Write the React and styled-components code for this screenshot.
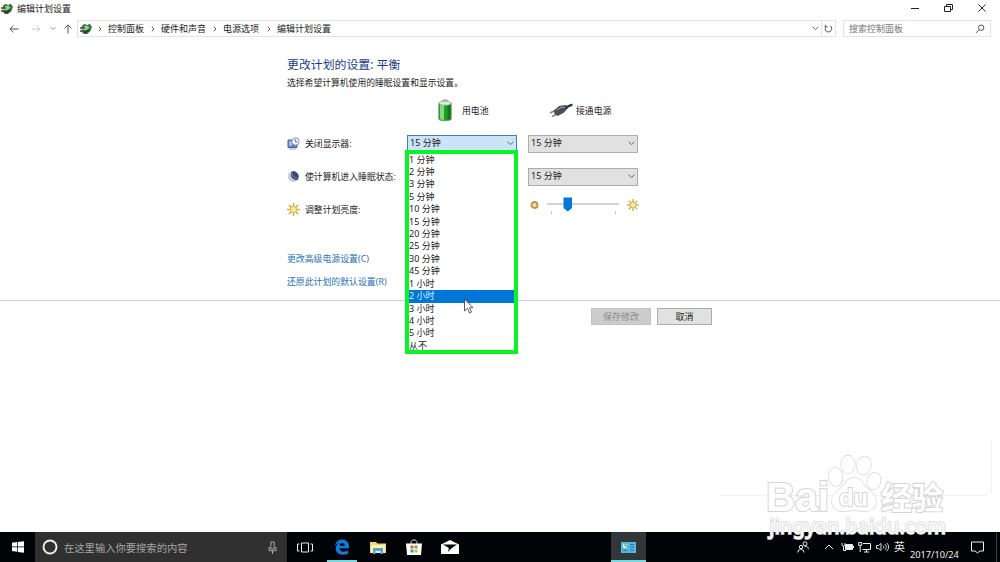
import React from 'react'
import styled, { createGlobalStyle } from 'styled-components'

const GlobalStyle = createGlobalStyle`
  * { box-sizing: border-box; }
  body {
    margin: 0;
    background: #fff;
    overflow: hidden;
    font-family: "Noto Sans", "Noto Sans CJK SC", sans-serif;
    font-size: 9px;
    color: #222;
  }
  svg { display: block; flex: none; }
`

const Screen = styled.div`
  position: relative;
  display: flex;
  flex-direction: column;
  width: 1000px;
  height: 562px;
  overflow: hidden;
`

// window chrome
const TitleBar = styled.header`
  display: flex;
  align-items: center;
  height: 17px;
  padding: 0 13px 0 1px;
`
const TitleText = styled.span`
  flex: 1;
  margin-left: 4px;
  line-height: 17px;
`
const WindowButtons = styled.div`
  display: flex;
  gap: 23px;
  margin-top: -2px;
`
const NavBar = styled.nav`
  display: flex;
  align-items: center;
  height: 23px;
  padding: 0 9px 0 8px;
`
const NavArrows = styled.div`
  display: flex;
  align-items: center;
  width: 69px;
`
const AddressBox = styled.div`
  display: flex;
  align-items: center;
  width: 759px;
  height: 17px;
  padding-left: 2px;
  border: 1px solid #e3e3e3;
`
const Crumb = styled.span`
  width: ${({ w }) => w}px;
  line-height: 15px;
  white-space: nowrap;
`
const CrumbArrow = styled.span`
  width: 16px;
  display: flex;
  justify-content: center;
`
const AddressTools = styled.div`
  display: flex;
  align-items: center;
  margin-left: auto;
  height: 15px;
`
const RefreshCell = styled.div`
  display: flex;
  align-items: center;
  justify-content: center;
  width: 14px;
  height: 15px;
  margin-left: 2px;
  border-left: 1px solid #e6e6e6;
`
const SearchBox = styled.div`
  display: flex;
  align-items: center;
  justify-content: space-between;
  width: 148px;
  height: 17px;
  margin-left: 7px;
  padding: 0 5px;
  border: 1px solid #e3e3e3;
  color: #757575;
`

// settings page
const Page = styled.main`
  display: flex;
  flex-direction: column;
  height: 261px;
  padding: 13px 0 0 287px;
  border-bottom: 1px solid #cfcfcf;
`
const Heading = styled.h1`
  margin: 0;
  font-size: 11.9px;
  font-weight: 400;
  line-height: 23px;
  color: #173c8c;
`
const Intro = styled.p`
  margin: 0 0 3px;
  font-size: 8.8px;
  line-height: 14px;
  padding-bottom: 1px;
`
const Row = styled.div`
  display: grid;
  grid-template-columns: 120px 110px 110px;
  align-items: center;
  height: 33px;
`
const Cell = styled.div`
  display: flex;
  align-items: center;
  gap: ${({ gap }) => gap || 5}px;
  padding-left: ${({ pad }) => pad || 0}px;
  font-size: 8.85px;
  line-height: 12px;
  white-space: nowrap;
`
const SelectWrap = styled.div`
  position: relative;
  grid-column: ${({ $col }) => $col};
  margin-left: ${({ $col }) => ($col === 3 ? 11 : 0)}px;
  margin-right: ${({ $col }) => ($col === 3 ? -11 : 0)}px;
`
const SelectBox = styled.div`
  display: flex;
  align-items: center;
  justify-content: space-between;
  height: 18px;
  padding: 0 2px;
  border: 1px solid ${({ $open }) => ($open ? '#3c7fb1' : '#adadad')};
  background: ${({ $open }) => ($open ? '#cce4f7' : '#e1e1e1')};
  line-height: 14px;
`
const SelectValue = styled.span`
  padding-bottom: 2px;
`
const Options = styled.ul`
  position: absolute;
  top: 15px;
  left: -2px;
  z-index: 2;
  width: 113px;
  height: 204px;
  margin: 0;
  padding: 0;
  list-style: none;
  border: 4px solid #05f525;
  background: #fff;
`
const Option = styled.li`
  height: 12.43px;
  line-height: 12.43px;
  color: ${({ $active }) => ($active ? '#d9edff' : '#222')};
  background: ${({ $active }) => ($active ? '#0076d7' : 'transparent')};
`
const Brightness = styled.div`
  grid-column: 3;
  display: flex;
  align-items: center;
  justify-content: space-between;
  width: 109px;
  height: 20px;
  margin: -9px 0 0 13px;
`
const Links = styled.div`
  display: flex;
  flex-direction: column;
  padding-top: 21px;
`
const Link = styled.a`
  height: 23px;
  font-size: 8.9px;
  line-height: 23px;
  color: #2671b8;
`
const Footer = styled.div`
  display: flex;
  gap: 6px;
  padding: 7px 0 0 591px;
`
const Button = styled.button`
  width: ${({ w }) => w}px;
  height: 17px;
  padding: 0;
  border: 1px solid ${({ disabled }) => (disabled ? '#c3c3c3' : '#adadad')};
  background: ${({ disabled }) => (disabled ? '#cccccc' : '#e1e1e1')};
  color: ${({ disabled }) => (disabled ? '#8d8d8d' : '#222')};
  font: inherit;
  line-height: 15px;
`

// overlays
const Watermark = styled.svg`
  position: absolute;
  left: 710px;
  top: 440px;
  z-index: 5;
`
const Cursor = styled.svg`
  position: absolute;
  left: 463px;
  top: 298px;
  z-index: 6;
`

// taskbar
const Taskbar = styled.footer`
  display: flex;
  align-items: center;
  height: 30px;
  margin-top: auto;
  background: #020306;
  color: #eee;
`
const StartButton = styled.div`
  display: flex;
  align-items: center;
  justify-content: center;
  width: 35px;
  height: 30px;
`
const TaskSearch = styled.div`
  display: flex;
  align-items: center;
  width: 252px;
  height: 30px;
  padding: 0 9px 0 7px;
  background: #303030;
  color: #a6a6a6;
  font-size: 10.3px;
`
const TaskSearchText = styled.span`
  flex: 1;
  margin-left: 6px;
  white-space: nowrap;
`
const TaskItem = styled.div`
  display: flex;
  align-items: center;
  justify-content: center;
  width: ${({ w }) => w}px;
  height: 30px;
  background: ${({ $current }) => ($current ? '#333638' : 'transparent')};
  box-shadow: ${({ $running }) => ($running ? 'inset 0 -2px #70dbe0' : 'none')};
`
const Tray = styled.div`
  display: flex;
  align-items: center;
  height: 30px;
  margin-left: auto;
`
const TrayIcon = styled.span`
  display: flex;
  justify-content: center;
  width: ${({ w }) => w}px;
`
const Lang = styled.span`
  width: 19px;
  text-align: center;
  font-size: 11px;
`
const DateText = styled.span`
  width: 52px;
  padding-top: 15px;
  font-size: 9.2px;
  line-height: 14px;
  white-space: nowrap;
`
const ShowDesktop = styled.div`
  width: 4px;
  height: 30px;
  border-left: 1px solid #3c3e40;
`

const PlanIcon = () => (
  <svg width="12" height="12" viewBox="0 0 12 12">
    <path d="M2 2.500 4.500 1l3 1L10 .5l.5 1.500L12 3.500 10.500 8 7 11H4L1.500 8.500z" fill="#37753b" />
    <path d="M3.500 3.500 7 2.500l2.500 2-3 3-3-1z" fill="#99c99a" />
    <path d="M0 5h4.500M0 8h4.500M4 4v5.500h2.500" stroke="#3e4b36" strokeWidth="1.300" fill="none" />
    <path d="M5 9.500 9 7" stroke="#163f1d" strokeWidth="1.500" />
    <path d="M2 6.500h3" stroke="#c8b996" strokeWidth="1.200" />
  </svg>
)

const Chevron = ({ color = '#666', size = 7 }) => (
  <svg width={size} height="5" viewBox="0 0 7 5">
    <path d="M.6.7 3.500 3.700 6.400.7" stroke={color} fill="none" />
  </svg>
)

const Arrow = ({ color, rotate = 0 }) => (
  <svg width="10" height="10" viewBox="0 0 10 10">
    <path d="M9.500 5H.9M4.300 1.500.9 5l3.400 3.500" stroke={color} fill="none" transform={`rotate(${rotate} 5 5)`} />
  </svg>
)

const RAYS = [0, 45, 90, 135, 180, 225, 270, 315]

const Sun = ({ size = 12 }) => (
  <svg width={size} height={size} viewBox="0 0 12 12">
    {RAYS.map((a) => (
      <path key={a} d="M6 0v3" stroke="#d2a32c" strokeWidth="1.200" transform={`rotate(${a} 6 6)`} />
    ))}
    <circle cx="6" cy="6" r="2.900" fill="#ffe99a" stroke="#d5a640" strokeWidth=".8" />
  </svg>
)

const MonitorIcon = () => (
  <svg width="13" height="13" viewBox="0 0 13 13">
    <path d="M1 3h9v7.500H1z" fill="#5b7dc4" stroke="#5267a0" />
    <path d="M2 4h3v5H2z" fill="#9fb9ea" />
    <path d="M2 12h7" stroke="#9b9ca5" />
    <circle cx="8.500" cy="4.500" r="3.700" fill="#edf0f4" stroke="#8590a5" strokeWidth=".9" />
    <path d="M8.500 2.200v2.600h2" stroke="#536074" strokeWidth=".8" fill="none" />
  </svg>
)

const MoonIcon = () => (
  <svg width="13" height="13" viewBox="0 0 13 13">
    <circle cx="6.500" cy="6.500" r="5.500" fill="#c8ced5" />
    <path d="M4.500 1.500a5.500 5.500 0 0 1 6 8.500C8 10.500 4.500 8.500 4 5.500z" fill="#364a6c" />
    <path d="M5 2.500c-.3 3 1.500 5 5 6" stroke="#7893ba" fill="none" />
  </svg>
)

const BatteryIcon = () => (
  <svg width="14" height="23" viewBox="0 0 14 23">
    <path d="M4 2.500V1.400C4 .5 10 .5 10 1.400v1.300" fill="#b9c9b8" stroke="#8fa08f" strokeWidth=".7" />
    <path d="M.7 4v16c0 2.400 12.600 2.400 12.600 0V4z" fill="#279b31" stroke="#6f936e" strokeWidth=".7" />
    <path d="M2 6v14c1 .8 2.500 1 4 1V6z" fill="#83dc78" />
    <path d="M9.500 6v14.800l3-.8V5.500z" fill="#11761c" />
    <ellipse cx="7" cy="4.300" rx="6.200" ry="2" fill="#dfece0" stroke="#87a486" strokeWidth=".7" />
  </svg>
)

const PlugIcon = () => (
  <svg width="24" height="15" viewBox="0 0 24 15">
    <path d="m1 10 6-3M3 13.500l6-3" stroke="#a9824d" strokeWidth="1.900" />
    <path d="m5 7.500 5-4.500 7-1 2 3-4.500 5-6 3-3-2z" fill="#4a4d53" />
    <path d="m8 7 4-2.500 4-.2" stroke="#a4aab2" fill="none" />
    <path d="M16 4.500c3 .5 4-3 7.500-2.500" stroke="#33363c" strokeWidth="2.400" fill="none" />
  </svg>
)

const SliderTrack = () => (
  <svg width="76" height="20" viewBox="0 0 76 20">
    <path d="M2 9h72" stroke="#d3d3d3" strokeWidth="2" />
    <path d="M6.500 16.500v3M70.500 16.500v3" stroke="#c5c5c5" />
    <path d="M18.500 2.500H27V13l-4.250 3.500L18.500 13z" fill="#0078d7" />
  </svg>
)

const BaiduMark = () => (
  <Watermark width="290" height="122" viewBox="0 0 290 122">
    <path d="M10 55.500h268M281.500 0v54" stroke="#f3f3f3" strokeWidth="1.500" fill="none" />
    <g
      fill="#fff"
      stroke="#d6d6d6"
      strokeWidth="2.200"
      paintOrder="stroke"
      fontFamily='"Liberation Sans", "Noto Sans CJK SC", sans-serif'
      fontWeight="700"
    >
      <text x="56" y="71" fontSize="41" textLength="63" lengthAdjust="spacingAndGlyphs">Bai</text>
      <text x="171" y="69" fontSize="31" textLength="62" lengthAdjust="spacingAndGlyphs">经验</text>
      <text
        x="59"
        y="94"
        fontSize="22"
        fontFamily='"Noto Sans", sans-serif'
        fontWeight="500"
        strokeWidth="1.600"
        stroke="#dadada"
        fill="#f7f7f7"
        textLength="177"
        lengthAdjust="spacingAndGlyphs"
      >
        jingyan.baidu.com
      </text>
      <g strokeWidth="1.400">
        <ellipse cx="125.500" cy="37" rx="7" ry="9" transform="rotate(-8 125.500 37)" />
        <ellipse cx="138" cy="24.500" rx="6.800" ry="9" />
        <ellipse cx="154" cy="25.500" rx="7" ry="9" transform="rotate(12 154 25.500)" />
        <ellipse cx="164" cy="41" rx="6.500" ry="8.500" transform="rotate(12 164 41)" />
        <path d="M144 38c-8 0-10 7-14 11-5 4-9 8-8 14 1 7 7 9 14 8 5-1 11-1 16 0 8 1 14-2 14-9s-5-10-9-14-6-10-13-10z" />
      </g>
      <text x="129" y="66" fontSize="23" strokeWidth="2" textLength="29" lengthAdjust="spacingAndGlyphs">du</text>
    </g>
  </Watermark>
)

const OPTIONS = [
  '1 分钟', '2 分钟', '3 分钟', '5 分钟', '10 分钟', '15 分钟', '20 分钟', '25 分钟',
  '30 分钟', '45 分钟', '1 小时', '2 小时', '3 小时', '4 小时', '5 小时', '从不',
]

const CRUMBS = [
  { text: '控制面板', w: 37 },
  { text: '硬件和声音', w: 46 },
  { text: '电源选项', w: 38 },
  { text: '编辑计划设置', w: 60 },
]

function Select({ col, value, open, children }) {
  return (
    <SelectWrap $col={col}>
      <SelectBox $open={open}>
        <SelectValue>{value}</SelectValue>
        <Chevron />
      </SelectBox>
      {children}
    </SelectWrap>
  )
}

function WindowHeader() {
  return (
    <>
      <TitleBar>
        <PlanIcon />
        <TitleText>编辑计划设置</TitleText>
        <WindowButtons>
          <svg width="9" height="10" viewBox="0 0 9 10"><path d="M0 5.500h8" stroke="#222" /></svg>
          <svg width="11" height="10" viewBox="0 0 11 10"><path d="M1.500 3.500h6v5h-6zM3.500 3V1.500h6v5H8" stroke="#222" fill="none" /></svg>
          <svg width="10" height="10" viewBox="0 0 10 10"><path d="m1.500 1.500 7 7m0-7-7 7" stroke="#222" /></svg>
        </WindowButtons>
      </TitleBar>
      <NavBar>
        <NavArrows>
          <Cell gap={12} pad={1}>
            <Arrow color="#555" />
            <Arrow color="#ccc" rotate={180} />
          </Cell>
          <Cell gap={7} pad={9}>
            <Chevron size={6} color="#888" />
            <Arrow color="#555" rotate={90} />
          </Cell>
        </NavArrows>
        <AddressBox>
          <PlanIcon />
          {CRUMBS.map(({ text, w }) => (
            <React.Fragment key={text}>
              <CrumbArrow>
                <svg width="4" height="6" viewBox="0 0 4 6"><path d="m.8.8 2.200 2.200L.8 5.200" stroke="#555" fill="none" /></svg>
              </CrumbArrow>
              <Crumb w={w}>{text}</Crumb>
            </React.Fragment>
          ))}
          <AddressTools>
            <Chevron />
            <RefreshCell>
              <svg width="9" height="9" viewBox="0 0 9 9"><path d="M6.300 1.900A3.300 3.300 0 1 1 2.500 2M1.300.7v2h2.200" stroke="#555" fill="none" /></svg>
            </RefreshCell>
          </AddressTools>
        </AddressBox>
        <SearchBox>
          搜索控制面板
          <svg width="10" height="10" viewBox="0 0 10 10"><circle cx="6.200" cy="3.700" r="2.700" stroke="#555" fill="none" /><path d="M4.200 5.700.8 9" stroke="#555" /></svg>
        </SearchBox>
      </NavBar>
    </>
  )
}

function TaskbarRow() {
  return (
    <Taskbar>
      <StartButton>
        <svg width="12" height="12" viewBox="0 0 12 12"><path d="m0 1.800 5.200-.7v4.500H0zM5.900 1 12 .2v5.400H5.900zM0 6.300h5.200v4.500L0 10.100zm5.900 0H12v5.500l-6.100-.9z" fill="#fff" /></svg>
      </StartButton>
      <TaskSearch>
        <svg width="16" height="16" viewBox="0 0 16 16"><circle cx="8" cy="8" r="6.500" stroke="#f0f0f0" strokeWidth="1.900" fill="none" /></svg>
        <TaskSearchText>在这里输入你要搜索的内容</TaskSearchText>
        <svg width="11" height="13" viewBox="0 0 11 13"><path d="M3.800 1h3.400v7H3.800zM2 6v3.700h7V6M5.500 10v3" stroke="#aaa" fill="none" /></svg>
      </TaskSearch>
      <TaskItem w={36}>
        <svg width="16" height="11" viewBox="0 0 16 11"><path d="M4.500 1h7v9h-7zM2.500 2H.5v7h2M13.500 2h2v7h-2" stroke="#eee" fill="none" /></svg>
      </TaskItem>
      <Cell pad={4}>
        <TaskItem w={30} $running>
          <svg width="16" height="16" viewBox="0 0 16 16"><path d="M.8 7C1.500 2.700 4.500.5 8 .5c4.500 0 7 3 7 7v1.800H5.500c.2 2.500 2 3.500 4.200 3.500 1.800 0 3.200-.5 4.500-1.200v3c-1.500.8-3.200 1.200-5.200 1.200-4.500 0-7.300-2.500-7.300-6.200C1.700 7 3.200 5 5.500 4 3.500 4.200 2 5.300.8 7zm4.800-.3h5.200c0-1.800-.8-2.800-2.500-2.800S5.700 5.100 5.600 6.700z" fill="#0a7fe0" /></svg>
        </TaskItem>
      </Cell>
      <TaskItem w={41}>
        <svg width="16" height="13" viewBox="0 0 16 13"><path d="M0 1h6l1.500 1.500H16V12H0z" fill="#f0d47c" /><path d="M1 4h14v8H1z" fill="#fff0ac" /><path d="M3 7h10v6h-2.500v-3h-5v3H3z" fill="#4ba6dc" /></svg>
      </TaskItem>
      <TaskItem w={31}>
        <svg width="18" height="17" viewBox="0 0 18 17"><path d="M6 5V3.500C6 0 12 0 12 3.500V5" stroke="#ddd" fill="none" /><path d="M1 4.500h16L16 16H2z" fill="#fff" /><path d="M5.500 6.500h3v3h-3z" fill="#e45b32" /><path d="M9.500 6.500h3v3h-3z" fill="#79ae32" /><path d="M5.500 10.500h3v3h-3z" fill="#3094d0" /><path d="M9.500 10.500h3v3h-3z" fill="#e6b32e" /></svg>
      </TaskItem>
      <TaskItem w={41}>
        <svg width="18" height="14" viewBox="0 0 18 14"><path d="M0 4.500 9 0l9 4.500V14H0z" fill="#fff" /><path d="M2 4.500h14L9.500 9z" fill="#080808" /><path d="M8 7.500 7 12l3.500-4z" fill="#080808" /></svg>
      </TaskItem>
      <Cell pad={141}>
        <TaskItem w={35} $running $current>
          <svg width="15" height="11" viewBox="0 0 15 11"><path d="M0 0h15v11H0z" fill="#55b9df" /><circle cx="4" cy="4" r="2.300" fill="#e7f8f5" /><path d="M4 1.500V4h2.500" stroke="#3a8e78" fill="none" /><path d="M9 2.500h4M9 5h4M2 8.500h4M9 8h4" stroke="#2172a5" /></svg>
        </TaskItem>
      </Cell>
      <Tray>
        <TrayIcon w={24}>
          <svg width="12" height="12" viewBox="0 0 12 12"><circle cx="8" cy="2.800" r="2" stroke="#eee" fill="none" /><circle cx="4" cy="6" r="1.700" stroke="#eee" fill="none" /><path d="M.8 11.500C1.200 7 6.500 7 7 11.500M7.500 6c2-1.500 3.800 0 4 2.200" stroke="#eee" fill="none" /></svg>
        </TrayIcon>
        <TrayIcon w={28}>
          <svg width="10" height="6" viewBox="0 0 10 6"><path d="m1 5 4-4 4 4" stroke="#eee" fill="none" /></svg>
        </TrayIcon>
        <TrayIcon w={8}>
          <svg width="13" height="10" viewBox="0 0 13 10"><path d="M1 1v2c0 1.500 3 1.500 3 0V1M2.500 4v4.500H5" stroke="#eee" fill="none" /><path d="M4.500 2.500h7v5h-7z" fill="#eee" stroke="#eee" /><path d="M12.500 4v2" stroke="#eee" /></svg>
        </TrayIcon>
        <TrayIcon w={27}>
          <svg width="13" height="12" viewBox="0 0 13 12"><path d="M5 2.500h7.500v6h-8M6 11h5M8.500 8.500V11M.7 1.500h3v2.800h-3zM2.200 4.300V11" stroke="#eee" fill="none" /></svg>
        </TrayIcon>
        <TrayIcon w={8}>
          <svg width="13" height="10" viewBox="0 0 13 10"><path d="M.5 3.500h2l2.500-2v7l-2.500-2h-2zM7 3.500c1 1 1 2 0 3M8.800 2c2 2 2 4 0 6M10.600.7c2.600 2.700 2.600 6 0 8.600" stroke="#eee" fill="none" strokeWidth=".9" /></svg>
        </TrayIcon>
        <Cell pad={4} gap={1}>
          <Lang>英</Lang>
          <DateText>2017/10/24</DateText>
        </Cell>
        <TrayIcon w={30}>
          <svg width="13" height="13" viewBox="0 0 13 13"><path d="M.5 1h12v9H9l-2.500 2L4 10H.5z" stroke="#eee" fill="none" /></svg>
        </TrayIcon>
        <Cell pad={4}>
          <ShowDesktop />
        </Cell>
      </Tray>
    </Taskbar>
  )
}

export default function App() {
  return (
    <Screen>
      <GlobalStyle />
      <WindowHeader />
      <Page>
        <Heading>更改计划的设置: 平衡</Heading>
        <Intro>选择希望计算机使用的睡眠设置和显示设置。</Intro>
        <Row>
          <span />
          <Cell gap={10} pad={31}><BatteryIcon />用电池</Cell>
          <Cell gap={3} pad={32}><PlugIcon />接通电源</Cell>
        </Row>
        <Row>
          <Cell><MonitorIcon />关闭显示器:</Cell>
          <Select col={2} value="15 分钟" open>
            <Options>
              {OPTIONS.map((text) => <Option key={text} $active={text === '2 小时'}>{text}</Option>)}
            </Options>
          </Select>
          <Select col={3} value="15 分钟" />
        </Row>
        <Row>
          <Cell><MoonIcon />使计算机进入睡眠状态:</Cell>
          <Select col={3} value="15 分钟" />
        </Row>
        <Row>
          <Cell><Sun size={13} />调整计划亮度:</Cell>
          <Brightness>
            <svg width="9" height="9" viewBox="0 0 9 9"><circle cx="4.500" cy="4" r="3" fill="#f7e4b3" stroke="#c98f45" strokeWidth="1.900" /></svg>
            <SliderTrack />
            <Sun />
          </Brightness>
        </Row>
        <Links>
          <Link>更改高级电源设置(C)</Link>
          <Link>还原此计划的默认设置(R)</Link>
        </Links>
      </Page>
      <Footer>
        <Button w={60} disabled>保存修改</Button>
        <Button w={55}>取消</Button>
      </Footer>
      <TaskbarRow />
      <Cursor width="10" height="16" viewBox="0 0 10 16">
        <path d="M1.500 1v12l3-2.700L6.500 15l2-1-2-4.300H10z" fill="#fff" stroke="#333" strokeWidth=".8" />
      </Cursor>
      <BaiduMark />
    </Screen>
  )
}
